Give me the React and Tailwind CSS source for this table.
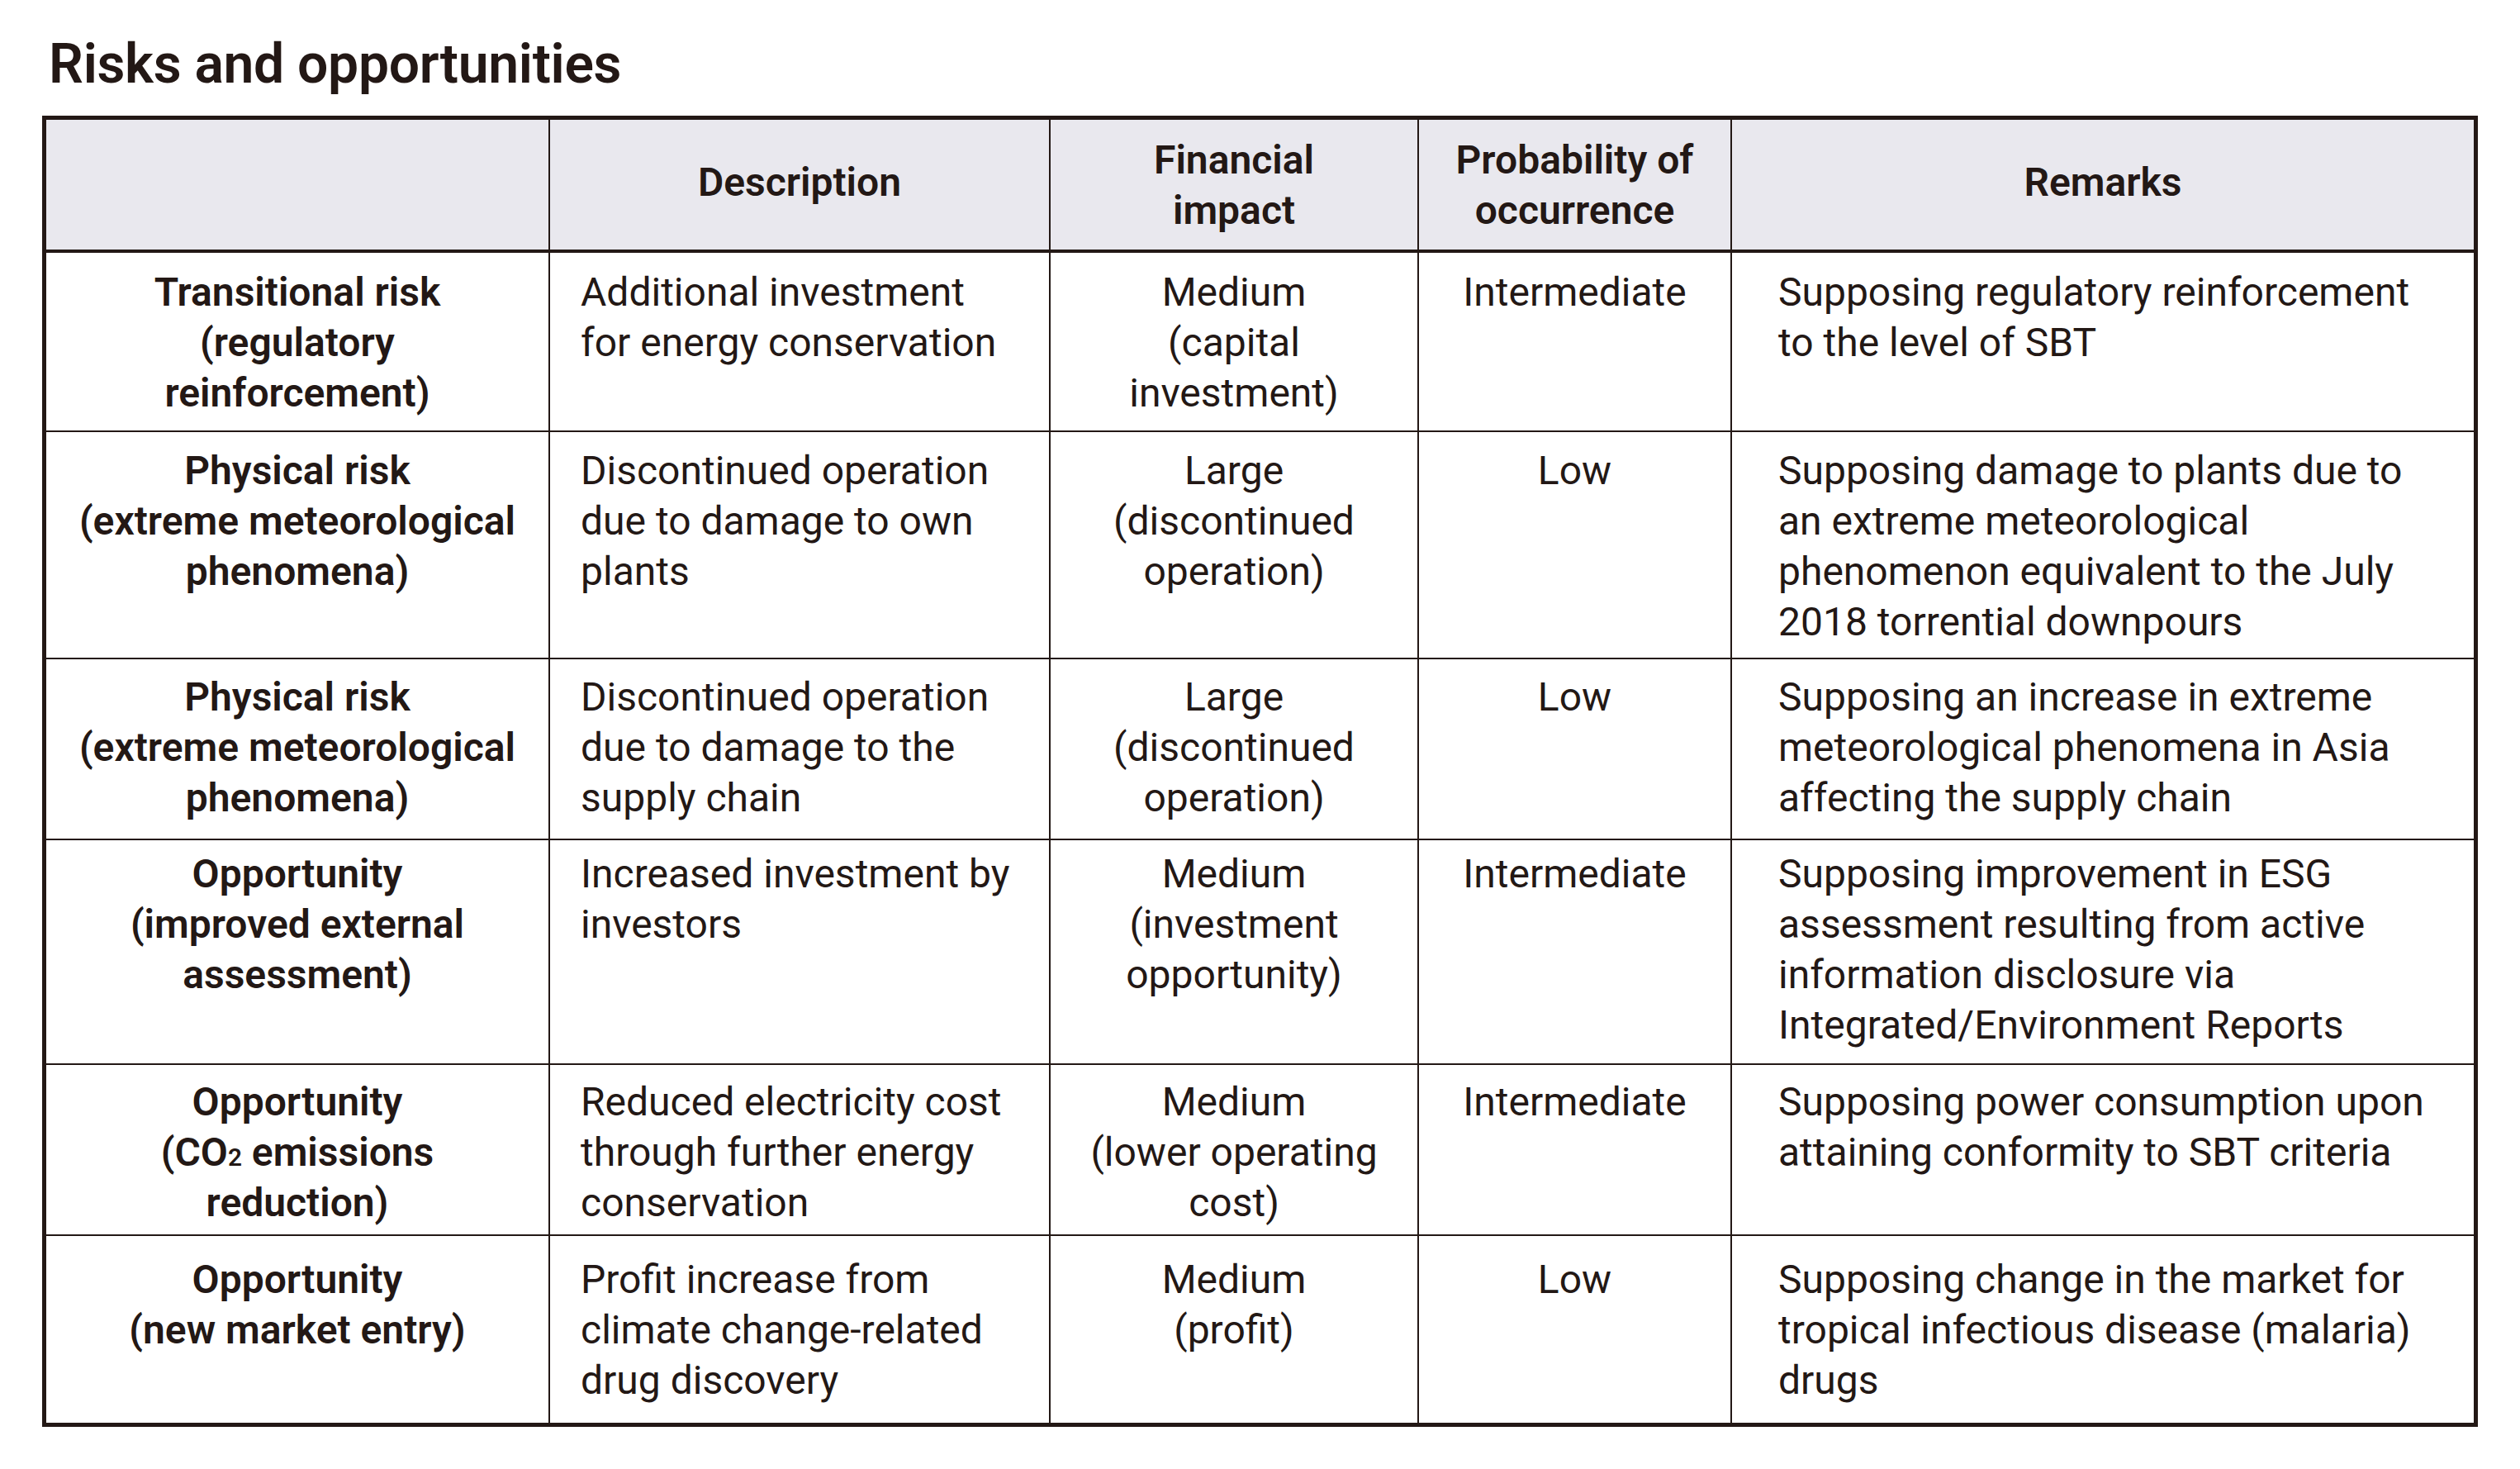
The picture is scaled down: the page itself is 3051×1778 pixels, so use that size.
import React from "react";

const rows = [
  {
    h: "h-[217px]",
    pt: "pt-[17px]",
    label: ["Transitional risk", "(regulatory", "reinforcement)"],
    desc: ["Additional investment", "for energy conservation"],
    fin: ["Medium", "(capital", "investment)"],
    prob: "Intermediate",
    rem: ["Supposing regulatory reinforcement", "to the level of SBT"],
  },
  {
    h: "h-[275px]",
    pt: "pt-[16px]",
    label: ["Physical risk", "(extreme meteorological", "phenomena)"],
    desc: ["Discontinued operation", "due to damage to own", "plants"],
    fin: ["Large", "(discontinued", "operation)"],
    prob: "Low",
    rem: [
      "Supposing damage to plants due to",
      "an extreme meteorological",
      "phenomenon equivalent to the July",
      "2018 torrential downpours",
    ],
  },
  {
    h: "h-[219px]",
    pt: "pt-[15px]",
    label: ["Physical risk", "(extreme meteorological", "phenomena)"],
    desc: ["Discontinued operation", "due to damage to the", "supply chain"],
    fin: ["Large", "(discontinued", "operation)"],
    prob: "Low",
    rem: [
      "Supposing an increase in extreme",
      "meteorological phenomena in Asia",
      "affecting the supply chain",
    ],
  },
  {
    h: "h-[272px]",
    pt: "pt-[10px]",
    label: ["Opportunity", "(improved external", "assessment)"],
    desc: ["Increased investment by", "investors"],
    fin: ["Medium", "(investment", "opportunity)"],
    prob: "Intermediate",
    rem: [
      "Supposing improvement in ESG",
      "assessment resulting from active",
      "information disclosure via",
      "Integrated/Environment Reports",
    ],
  },
  {
    h: "h-[207px]",
    pt: "pt-[14px]",
    label: [
      "Opportunity",
      <span key="co2">
        (CO<span className="text-[0.62em] leading-[0]">2</span> emissions
      </span>,
      "reduction)",
    ],
    desc: ["Reduced electricity cost", "through further energy", "conservation"],
    fin: ["Medium", "(lower operating", "cost)"],
    prob: "Intermediate",
    rem: ["Supposing power consumption upon", "attaining conformity to SBT criteria"],
  },
  {
    h: "h-[226px]",
    pt: "pt-[22px]",
    label: ["Opportunity", "(new market entry)"],
    desc: ["Profit increase from", "climate change-related", "drug discovery"],
    fin: ["Medium", "(profit)"],
    prob: "Low",
    rem: [
      "Supposing change in the market for",
      "tropical infectious disease (malaria)",
      "drugs",
    ],
  },
];

function Lines({ items }) {
  return items.map((t, i) => (
    <div key={i} className="whitespace-nowrap">
      {t}
    </div>
  ));
}

export default function App() {
  return (
    <div className="min-h-screen w-[3051px] bg-white pl-[51px] pt-[38px] font-[family-name:Roboto,sans-serif] text-[#231815]">
      <h1 className="pl-[8px] text-[66px] leading-[80px] font-semibold tracking-[-0.3px]">
        Risks and opportunities
      </h1>
      <div className="mt-[22px] w-[2949px] border-[5px] border-[#231815] text-[48px] leading-[61px]">
        <div className="grid h-[161px] grid-cols-[610px_606px_446px_379px_898px] border-b-4 border-[#231815] bg-[#e9e8ee] font-semibold">
          <div className="border-r-2 border-[#231815]" />
          <div className="flex items-center justify-center border-r-2 border-[#231815] pb-[6px] text-center">
            Description
          </div>
          <div className="flex items-center justify-center border-r-2 border-[#231815] text-center">
            <div>
              <div>Financial</div>
              <div>impact</div>
            </div>
          </div>
          <div className="flex items-center justify-center border-r-2 border-[#231815] text-center">
            <div>
              <div>Probability of</div>
              <div>occurrence</div>
            </div>
          </div>
          <div className="flex items-center justify-center pb-[6px] text-center">Remarks</div>
        </div>
        {rows.map((r, i) => (
          <div
            key={i}
            className={`grid grid-cols-[610px_606px_446px_379px_898px] ${r.h} ${
              i < rows.length - 1 ? "border-b-2 border-[#231815]" : ""
            }`}
          >
            <div className={`border-r-2 border-[#231815] text-center font-semibold ${r.pt}`}>
              <Lines items={r.label} />
            </div>
            <div className={`border-r-2 border-[#231815] pl-[37px] ${r.pt}`}>
              <Lines items={r.desc} />
            </div>
            <div className={`border-r-2 border-[#231815] text-center ${r.pt}`}>
              <Lines items={r.fin} />
            </div>
            <div className={`border-r-2 border-[#231815] text-center ${r.pt}`}>
              <div>{r.prob}</div>
            </div>
            <div className={`pl-[56px] ${r.pt}`}>
              <Lines items={r.rem} />
            </div>
          </div>
        ))}
      </div>
    </div>
  );
}
